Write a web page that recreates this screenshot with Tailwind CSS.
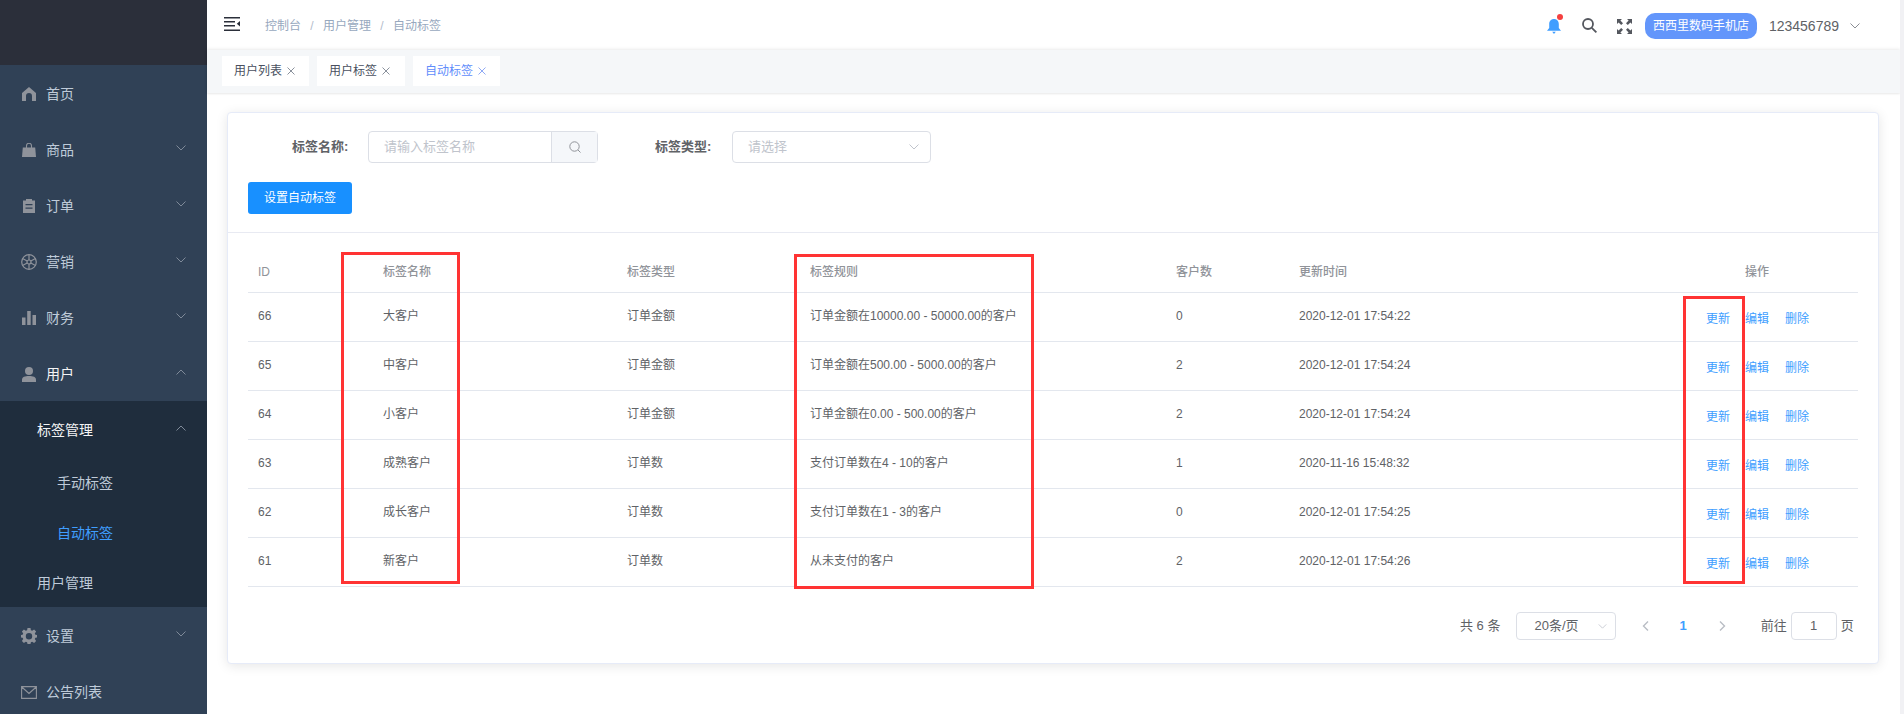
<!DOCTYPE html>
<html lang="zh-CN">
<head>
  <meta charset="UTF-8">
  <title>自动标签</title>
  <script src="https://cdn.jsdelivr.net/npm/@tailwindcss/browser@4"></script>
</head>
<body class="font-['Liberation_Sans','Noto_Sans_CJK_SC',sans-serif] text-xs text-[#606266] bg-white">
  <div class="flex h-[714px] w-[1904px] overflow-hidden">

    <!-- 侧边栏 -->
    <aside class="w-[207px] shrink-0 bg-[#304156] text-sm text-[#bfcbd9]">
      <div class="h-[65px] bg-[#2b2f3a]"></div>
      <div class="h-14 pt-[2px] flex items-center pl-[22px]">
        <svg class="w-[14px] h-[14px] mr-[10px]" viewBox="0 0 14 14" fill="#8f939b"><path d="M7 0 14 6v8H10V9a3 3 0 0 0-6 0v5H0V6z"/></svg>
        <span>首页</span>
      </div>
      <div class="h-14 pt-[2px] flex items-center pl-[22px] pr-[21px]">
        <svg class="w-[14px] h-[14px] mr-[10px]" viewBox="0 0 14 14" fill="#8f939b"><path d="M.8 4.500h12.400L14 14H0z"/><path d="M4.500 5V2.800a2.500 2.500 0 0 1 5 0V5" fill="none" stroke="#8f939b" stroke-width="1.100"/></svg>
        <span>商品</span>
        <svg class="ml-auto -mt-[5px] w-[10px] h-[6px]" viewBox="0 0 10 6" fill="none" stroke="#7f8a99"><path d="M.5.5 5 5 9.500.5"/></svg>
      </div>
      <div class="h-14 pt-[2px] flex items-center pl-[22px] pr-[21px]">
        <svg class="w-[14px] h-[14px] mr-[10px]" viewBox="0 0 14 14" fill="#8f939b"><path fill-rule="evenodd" d="M1 1.500h3V0h6v1.500h3V14H1zM3.500 5v1.200h7V5zm0 3.500v1.200h7V8.500z"/></svg>
        <span>订单</span>
        <svg class="ml-auto -mt-[5px] w-[10px] h-[6px]" viewBox="0 0 10 6" fill="none" stroke="#7f8a99"><path d="M.5.5 5 5 9.500.5"/></svg>
      </div>
      <div class="h-14 pt-[2px] flex items-center pl-[21px] pr-[21px]">
        <svg class="w-4 h-4 mr-[9px]" viewBox="0 0 16 16" fill="none" stroke="#8f939b" stroke-width="1.200"><circle cx="8" cy="8" r="7.300"/><circle cx="8" cy="8" r="2"/><path d="M8 .7V6M8 10v5.300M1.500 4.500 6.200 7M9.800 9l4.700 2.500M1.500 11.500 6.200 9M9.800 7l4.700-2.500"/></svg>
        <span>营销</span>
        <svg class="ml-auto -mt-[5px] w-[10px] h-[6px]" viewBox="0 0 10 6" fill="none" stroke="#7f8a99"><path d="M.5.5 5 5 9.500.5"/></svg>
      </div>
      <div class="h-14 pt-[2px] flex items-center pl-[22px] pr-[21px]">
        <svg class="w-[14px] h-[14px] mr-[10px]" viewBox="0 0 14 14" fill="#8f939b"><path d="M0 6.500h3.500V14H0zM5.200 0h3.500v14H5.200zM10.500 4H14v10h-3.500z"/></svg>
        <span>财务</span>
        <svg class="ml-auto -mt-[5px] w-[10px] h-[6px]" viewBox="0 0 10 6" fill="none" stroke="#7f8a99"><path d="M.5.5 5 5 9.500.5"/></svg>
      </div>
      <div class="h-14 pt-[2px] flex items-center pl-[22px] pr-[21px] text-[#f4f4f5]">
        <svg class="w-[14px] h-[15px] mr-[10px]" viewBox="0 0 14 15" fill="#8f939b"><circle cx="7" cy="4" r="4"/><path d="M0 15v-2.500C0 10 3 9 7 9s7 1 7 3.500V15z"/></svg>
        <span>用户</span>
        <svg class="ml-auto -mt-[5px] w-[10px] h-[6px]" viewBox="0 0 10 6" fill="none" stroke="#7f8a99"><path d="M.5 5.500 5 1l4.500 4.500"/></svg>
      </div>
      <div class="bg-[#1f2d3d]">
        <div class="h-14 pt-[2px] flex items-center pl-[37px] pr-[21px] text-[#f4f4f5]">
          <span>标签管理</span>
          <svg class="ml-auto -mt-[5px] w-[10px] h-[6px]" viewBox="0 0 10 6" fill="none" stroke="#7f8a99"><path d="M.5 5.500 5 1l4.500 4.500"/></svg>
        </div>
        <div class="h-[50px] pt-[2px] flex items-center pl-[57px]">手动标签</div>
        <div class="h-[50px] pt-[2px] flex items-center pl-[57px] text-[#409eff]">自动标签</div>
        <div class="h-[50px] pt-[2px] flex items-center pl-[37px]">用户管理</div>
      </div>
      <div class="h-14 pt-[2px] flex items-center pl-[21px] pr-[21px]">
        <svg class="w-4 h-4 mr-[9px]" viewBox="0 0 16 16" fill="#8f939b"><path fill-rule="evenodd" d="M6.500 0h3l.4 2.200 1.300.6L13.100 1.500l2 2-1.300 1.900.6 1.300L16 7v2.500l-1.600.3-.6 1.300 1.300 1.900-2 2-1.900-1.300-1.300.6-.4 1.700h-3l-.4-1.700-1.300-.6-1.900 1.300-2-2 1.300-1.900-.6-1.300L0 9.500V7l1.600-.3.600-1.300L.9 3.500l2-2 1.900 1.300 1.300-.6zM8 5a3.200 3.200 0 1 0 0 6.400A3.200 3.200 0 0 0 8 5z"/></svg>
        <span>设置</span>
        <svg class="ml-auto -mt-[5px] w-[10px] h-[6px]" viewBox="0 0 10 6" fill="none" stroke="#7f8a99"><path d="M.5.5 5 5 9.500.5"/></svg>
      </div>
      <div class="h-14 pt-[2px] flex items-center pl-[21px]">
        <svg class="w-4 h-[13px] mr-[9px]" viewBox="0 0 16 13" fill="none" stroke="#8f939b" stroke-width="1.100"><path d="M.6.6h14.800v11.800H.6zM.8 1 8 7.500 15.200 1"/></svg>
        <span>公告列表</span>
      </div>
    </aside>

    <!-- 右侧内容 -->
    <div class="flex-1 min-w-0 flex flex-col">
      <header class="h-[50px] shrink-0 pt-[2px] flex items-center pl-[17px] pr-[40px]">
        <svg class="w-4 h-[14px] -mt-[4px]" viewBox="0 0 16 14" fill="#2b2f3a"><path d="M0 0h16v1.400H0zM0 4h11v1.600H0zM0 8h11v1.600H0zM0 12.500h16V14H0zM16 4v5.500L12.800 6.800z"/></svg>
        <nav class="ml-[25px] flex text-[#97a8be]">
          <span>控制台</span><span class="w-[22px] text-center text-[#b4bccc]">/</span><span>用户管理</span><span class="w-[22px] text-center text-[#b4bccc]">/</span><span>自动标签</span>
        </nav>
        <div class="ml-auto relative w-[14px] h-[14px]">
          <svg class="w-[14px] h-[15px]" viewBox="0 0 14 15" fill="#409eff"><path d="M7 0c3 0 4.800 2.200 4.800 5v4L14 11.800H0L2.200 9V5C2.200 2.200 4 0 7 0zM5.200 12.800h3.600L7 15z"/></svg>
          <span class="absolute -top-[5px] left-[10px] w-[6px] h-[6px] rounded-full bg-[#f5403f]"></span>
        </div>
        <svg class="ml-[21px] -mt-[2px] w-[15px] h-[15px]" viewBox="0 0 15 15" fill="none" stroke="#54575e" stroke-width="1.800"><circle cx="6" cy="6" r="5"/><path d="m9.800 9.800 4.600 4.600"/></svg>
        <svg class="ml-[20px] w-[15px] h-[15px]" viewBox="0 0 15 15" fill="#54575e"><path d="M0 0h5L3.400 1.600 6 4.200 4.200 6 1.600 3.400 0 5zM15 0v5l-1.600-1.600L10.800 6 9 4.200l2.600-2.600L10 0zM0 15v-5l1.600 1.600L4.200 9 6 10.800l-2.600 2.600L5 15zM15 15h-5l1.600-1.600L9 10.800 10.800 9l2.600 2.600L15 10z"/></svg>
        <span class="ml-[13px] w-28 h-[26px] leading-[26px] text-center rounded-[10px] bg-[#6396fb] text-white">西西里数码手机店</span>
        <span class="ml-3 text-sm">123456789</span>
        <svg class="ml-[11px] w-[10px] h-[6px]" viewBox="0 0 10 6" fill="none" stroke="#8a8d93"><path d="M.5.5 5 5 9.500.5"/></svg>
      </header>

      <div class="h-[43px] shrink-0 flex gap-2 pt-[6px] pl-[15px] bg-[#f5f7f9] shadow-[0_-1px_3px_rgba(0,0,0,0.08),0_1px_2px_rgba(0,0,0,0.08)]">
        <div class="w-[87px] h-[30px] bg-white flex items-center pl-3 text-[#495060]">用户列表
          <svg class="ml-[5px] w-2 h-2" viewBox="0 0 8 8" fill="none" stroke="#8a919c"><path d="m.5.5 7 7M7.500.5l-7 7"/></svg>
        </div>
        <div class="w-[88px] h-[30px] bg-white flex items-center pl-3 text-[#495060]">用户标签
          <svg class="ml-[5px] w-2 h-2" viewBox="0 0 8 8" fill="none" stroke="#8a919c"><path d="m.5.5 7 7M7.500.5l-7 7"/></svg>
        </div>
        <div class="w-[87px] h-[30px] bg-white flex items-center pl-3 text-[#5f8dfb]">自动标签
          <svg class="ml-[5px] w-2 h-2" viewBox="0 0 8 8" fill="none" stroke="#8fa9f5"><path d="m.5.5 7 7M7.500.5l-7 7"/></svg>
        </div>
      </div>

      <main class="flex-1 pl-5 pr-[21px] pt-[19px]">
        <section class="h-[552px] rounded border border-[#e6ebf8] bg-white shadow-[0_2px_12px_rgba(0,0,0,0.1)]">
          <div class="h-[120px] border-b border-[#e8eaf2] pt-[18px] pl-5">
            <div class="flex items-center h-8">
              <label class="ml-[44px] w-[76px] text-[13px] font-bold text-[#606266]">标签名称:</label>
              <div class="w-[230px] h-8 flex rounded border border-[#dcdfe6] text-[13px]">
                <span class="w-[182px] pl-[15px] leading-[30px] text-[#c0c4cc]">请输入标签名称</span>
                <span class="flex-1 flex items-center justify-center border-l border-[#dcdfe6] bg-[#f5f7fa]">
                  <svg class="w-3 h-3" viewBox="0 0 12 12" fill="none" stroke="#909399"><circle cx="5.500" cy="5.500" r="4.700"/><path d="m9 9 2.500 2.500"/></svg>
                </span>
              </div>
              <label class="ml-[57px] w-[77px] text-[13px] font-bold text-[#606266]">标签类型:</label>
              <div class="w-[199px] h-8 flex items-center justify-between rounded border border-[#dcdfe6] pl-[15px] pr-[11px] text-[13px] text-[#c0c4cc]">
                <span>请选择</span>
                <svg class="w-[10px] h-[6px]" viewBox="0 0 10 6" fill="none" stroke="#c0c4cc"><path d="M.5.5 5 5 9.500.5"/></svg>
              </div>
            </div>
            <button class="mt-[19px] w-[104px] h-8 rounded-[3px] bg-[#1890ff] text-white">设置自动标签</button>
          </div>

          <div class="relative mx-5 mt-[19px]">
            <table class="w-[1610px] table-fixed border-collapse">
              <colgroup>
                <col class="w-[125px]"><col class="w-[244px]"><col class="w-[183px]"><col class="w-[366px]"><col class="w-[123px]"><col class="w-[446px]"><col class="w-[123px]">
              </colgroup>
              <thead>
                <tr class="h-10 border-b border-[#e3e7ee] text-left text-[#909399] font-medium">
                  <th class="pl-[10px] font-medium">ID</th>
                  <th class="pl-[10px] font-medium">标签名称</th>
                  <th class="pl-[10px] font-medium">标签类型</th>
                  <th class="pl-[10px] font-medium">标签规则</th>
                  <th class="pl-[10px] font-medium">客户数</th>
                  <th class="pl-[10px] font-medium">更新时间</th>
                  <th class="pl-[10px] font-medium">操作</th>
                </tr>
              </thead>
              <tbody id="rows"></tbody>
            </table>

            <!-- 截图上的红框标注 -->
            <div class="absolute left-[93px] top-0 w-[119px] h-[332px] border-[3px] border-[#ff3333]"></div>
            <div class="absolute left-[546px] top-[2px] w-[240px] h-[335px] border-[3px] border-[#ff3333]"></div>
            <div class="absolute left-[1435px] top-[44px] w-[62px] h-[288px] border-[3px] border-[#ff3333]"></div>

            <div class="h-[78px] flex items-center text-[13px] pt-[1px]">
              <span class="ml-[1212px]">共 6 条</span>
              <div class="ml-4 w-[100px] h-7 flex items-center justify-between rounded border border-[#dcdfe6] pl-[17px] pr-2">
                <span>20条/页</span>
                <svg class="w-[9px] h-[5px]" viewBox="0 0 10 6" fill="none" stroke="#c0c4cc"><path d="M.5.5 5 5 9.500.5"/></svg>
              </div>
              <svg class="ml-[26px] w-[7px] h-[10px]" viewBox="0 0 7 10" fill="none" stroke="#b9bdc4" stroke-width="1.400"><path d="M6 .5 1.500 5 6 9.500"/></svg>
              <span class="ml-[30px] font-bold text-[#409eff]">1</span>
              <svg class="ml-[32px] w-[7px] h-[10px]" viewBox="0 0 7 10" fill="none" stroke="#b9bdc4" stroke-width="1.400"><path d="M1 .5 5.500 5 1 9.500"/></svg>
              <span class="ml-[35px]">前往</span>
              <span class="ml-1 w-[46px] h-7 leading-[26px] text-center rounded border border-[#dcdfe6]">1</span>
              <span class="ml-1">页</span>
            </div>
          </div>
        </section>
      </main>
    </div>

    <!-- 滚动条 -->
    <div class="w-1 shrink-0 bg-[#f1f1f4]"></div>
  </div>

  <script>
    const rows = [
      [66, '大客户', '订单金额', '订单金额在10000.00 - 50000.00的客户', 0, '2020-12-01 17:54:22'],
      [65, '中客户', '订单金额', '订单金额在500.00 - 5000.00的客户', 2, '2020-12-01 17:54:24'],
      [64, '小客户', '订单金额', '订单金额在0.00 - 500.00的客户', 2, '2020-12-01 17:54:24'],
      [63, '成熟客户', '订单数', '支付订单数在4 - 10的客户', 1, '2020-11-16 15:48:32'],
      [62, '成长客户', '订单数', '支付订单数在1 - 3的客户', 0, '2020-12-01 17:54:25'],
      [61, '新客户', '订单数', '从未支付的客户', 2, '2020-12-01 17:54:26']
    ];
    document.getElementById('rows').innerHTML = rows.map(r => `
      <tr class="h-[49px] border-b border-[#e3e7ee]">
        ${r.map(v => `<td class="pl-[10px] pb-[2px]">${v}</td>`).join('')}
        <td><div class="flex justify-end pr-[49px] pt-[4px] text-[#409eff]"><span class="shrink-0 mr-[15px]">更新</span><span class="shrink-0 mr-4">编辑</span><span class="shrink-0">删除</span></div></td>
      </tr>`).join('');
  </script>
</body>
</html>
